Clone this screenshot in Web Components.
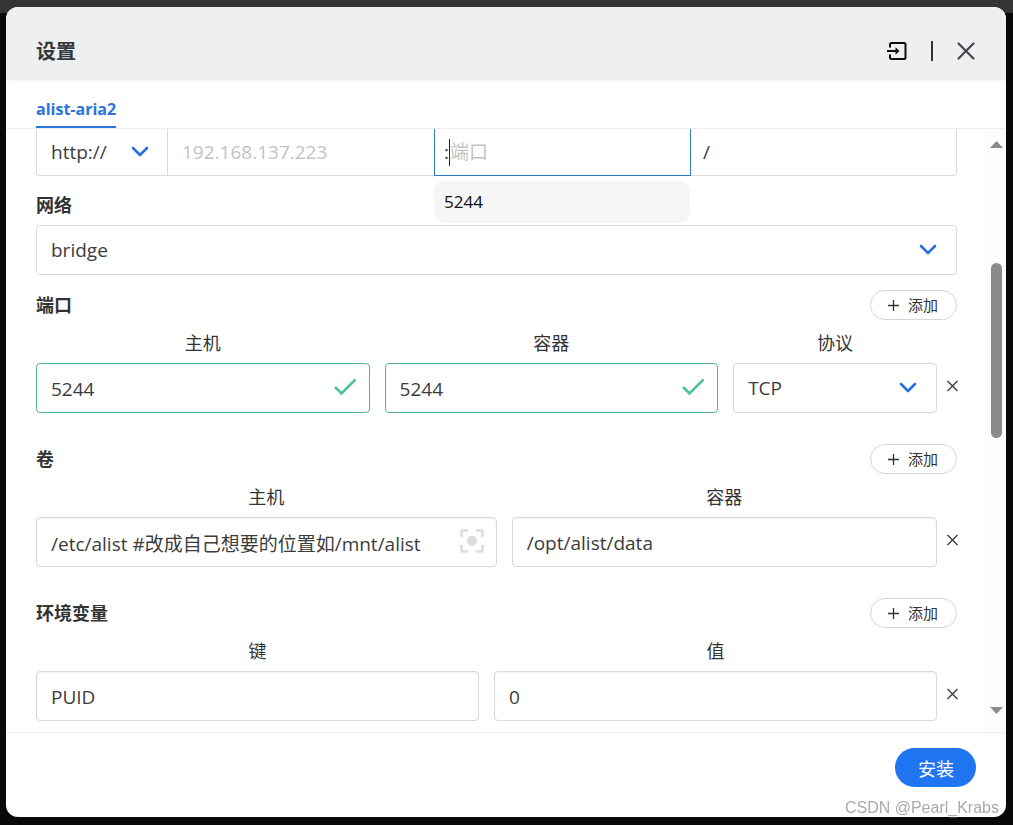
<!DOCTYPE html>
<html lang="zh-CN">
<head>
<meta charset="utf-8">
<title>设置</title>
<style>
  html, body { height: 100%; margin: 0; }
  body {
    box-sizing: border-box;
    padding: 7px 7px 8px 6px;
    background: linear-gradient(#333434 13px, #09090a 13px);
    font-family: "Open Sans", "Noto Sans CJK SC", sans-serif;
    color: #3c3c3c;
    overflow: hidden;
  }
</style>
</head>
<body>
<settings-dialog heading="设置">
  <tab-bar slot="tabs" label="alist-aria2"></tab-bar>
  <web-address></web-address>
  <network-field label="网络" value="bridge"></network-field>
  <list-section heading="端口" style="--cols: 18fr 18fr 11fr">
    <form-field label="主机" value="5244" icon="check"></form-field>
    <form-field label="容器" value="5244" icon="check"></form-field>
    <form-field label="协议" value="TCP" kind="select"></form-field>
  </list-section>
  <list-section heading="卷" style="--cols: 13fr 12fr">
    <form-field label="主机" value="/etc/alist #改成自己想要的位置如/mnt/alist" icon="pick"></form-field>
    <form-field label="容器" value="/opt/alist/data"></form-field>
  </list-section>
  <list-section heading="环境变量" style="--cols: 1fr 1fr">
    <form-field label="键" value="PUID"></form-field>
    <form-field label="值" value="0"></form-field>
  </list-section>
  <pill-button slot="footer" kind="primary">安装</pill-button>
</settings-dialog>
<water-mark>CSDN @Pearl_Krabs</water-mark>

<script>
const ICONS = {
  chevron: '<svg width="18" height="12" viewBox="0 0 18 12" fill="none" stroke="#2670e0" stroke-width="2.6" stroke-linecap="round" stroke-linejoin="round"><path d="M2 2l7 7 7-7"/></svg>',
  check: '<svg width="24" height="20" viewBox="0 0 24 20" fill="none" stroke="#4fc294" stroke-width="2.6"><path d="M2 10l6.5 6.5L22.500 2.500"/></svg>',
  pick: '<svg width="24" height="24" viewBox="0 0 24 24" fill="none" stroke="#dcdcdc" stroke-width="2.6"><path d="M1.500 8V3q0-1.500 1.500-1.500h5M16 1.500h5q1.500 0 1.500 1.500v5M22.500 16v5q0 1.500-1.500 1.500h-5M8 22.500H3q-1.500 0-1.500-1.500v-5"/><circle cx="12" cy="12" r="5" fill="#dcdcdc" stroke="none"/></svg>',
  remove: '<svg width="11" height="12" viewBox="0 0 11 12" fill="none" stroke="#444" stroke-width="1.500"><path d="M.5 1l10 10M10.500 1l-10 10"/></svg>',
  plus: '<svg width="11" height="11" viewBox="0 0 11 11" fill="none" stroke="#333" stroke-width="1.300"><path d="M5.500 0v11M0 5.500h11"/></svg>',
  close: '<svg width="18" height="18" viewBox="0 0 18 18" fill="none" stroke="#45484b" stroke-width="2.200" stroke-linecap="round"><path d="M1.500 1.500l15 15M16.500 1.500l-15 15"/></svg>',
  enter: '<svg width="20" height="18" viewBox="0 0 20 18" fill="none" stroke="#0c0c0c" stroke-width="2"><path d="M3 5.500V2.500q0-1.500 1.500-1.500h12.500q1.500 0 1.500 1.500v13q0 1.500-1.500 1.500H4.500q-1.500 0-1.500-1.500v-3"/><path d="M0 9h10"/><path d="M8.500 5.200L12.500 9l-4 3.800z" fill="#0c0c0c" stroke="none"/></svg>'
};

const CONTROL_CSS = `
  *, *::before { box-sizing: border-box; }
  input, select {
    font: inherit; color: inherit; width: 100%; height: 100%; min-width: 0; margin: 0;
    border: 0; outline: 0; background: transparent; appearance: none; padding: 0 14px;
    text-overflow: ellipsis;
  }
  input::placeholder { color: #c3c3c3; opacity: 1; }
  svg { display: block; pointer-events: none; flex: none; }
  .box {
    display: grid; align-items: center; height: 50px; font-size: 19px;
    border: 1px solid #d9d9d9; border-radius: 4px; background: #fff;
  }
  .box > * { grid-area: 1 / 1; }
  .box > svg { justify-self: end; margin-right: 19px; }
`;

class Base extends HTMLElement {
  connectedCallback() {
    if (this.shadowRoot) return;
    this.attachShadow({ mode: 'open' }).innerHTML = this.render();
  }
  attr(name) { return this.getAttribute(name) || ''; }
}

customElements.define('pill-button', class extends Base {
  render() {
    const primary = this.attr('kind') === 'primary';
    return `<style>
      :host { display: block; }
      button {
        display: flex; align-items: center; justify-content: center; gap: 9px; margin: 0;
        font-family: "Noto Sans CJK SC", sans-serif; line-height: 20px; cursor: pointer; border-radius: 20px;
      }
      .primary { height: 39px; padding: 0 22px 0 23px; border: 0; background: #2076f2; color: #fff; font-size: 18px; }
      .add { height: 30px; padding: 0 18px 0 17px; border: 1px solid #d6d6d6; background: #fff; color: #333; font-size: 15px; }
    </style>
    <button type="button" class="${primary ? 'primary' : 'add'}">${primary ? '' : ICONS.plus}<slot></slot></button>`;
  }
});

customElements.define('form-field', class extends Base {
  render() {
    const icon = this.attr('icon');
    const select = this.attr('kind') === 'select';
    return `<style>${CONTROL_CSS}
      :host { display: block; min-width: 0; }
      label { display: block; text-align: center; font-size: 18px; line-height: 30px; padding: 8px 0 5px; color: #333; }
      .text { box-shadow: inset 0 1px 2px #0000000f; }
      .text input { padding-top: 2px; }
      .check { border-color: #4dba8e; box-shadow: none; }
      .box.check > svg { margin: 0 12px 3px 0; }
      .box.pick > svg { margin: 0 12px 2px 0; }
    </style>
    <label for="control">${this.attr('label')}</label>
    <div class="box ${select ? '' : 'text'} ${icon}">
      ${select
        ? `<select id="control"><option>${this.attr('value')}</option></select>${ICONS.chevron}`
        : `<input id="control" type="text" value="${this.attr('value')}">${ICONS[icon] || ''}`}
    </div>`;
  }
});

customElements.define('network-field', class extends Base {
  render() {
    return `<style>${CONTROL_CSS}
      :host { display: block; margin-bottom: 15px; }
      label { display: block; font-size: 18px; font-weight: 700; line-height: 30px; padding: 14px 0 5px; color: #333; }
    </style>
    <label for="net">${this.attr('label')}</label>
    <div class="box"><select id="net"><option>${this.attr('value')}</option></select>${ICONS.chevron}</div>`;
  }
});

customElements.define('web-address', class extends Base {
  render() {
    return `<style>${CONTROL_CSS}
      :host { display: block; }
      .row { display: grid; grid-template-columns: 132px 29fr 28fr 29fr; height: 47px; font-size: 19px; }
      .cell { display: flex; align-items: center; position: relative; min-width: 0; border-bottom: 1px solid #d9d9d9; }
      .scheme { border-left: 1px solid #d9d9d9; border-right: 1px solid #d9d9d9; border-bottom-left-radius: 4px; display: grid; }
      .scheme > * { grid-area: 1 / 1; }
      .scheme svg { justify-self: end; margin-right: 18px; }
      .port { border: 1px solid #2f7ac6; border-top: 0; padding-left: 9px; }
      .port input { padding: 0; }
      .caret { width: 1px; height: 27px; background: #222; flex: none; }
      .path { border-right: 1px solid #d9d9d9; border-bottom-right-radius: 4px; padding-left: 12px; }
      .path input { padding: 0 8px; }
      .menu {
        position: absolute; z-index: 2; top: 52px; left: -1px; right: 0; margin: 0; padding: 0 10px;
        list-style: none; height: 42px; line-height: 42px; border-radius: 10px;
        background: #f6f6f6; color: #111; font-size: 17px;
      }
    </style>
    <div class="row">
      <div class="cell scheme"><select aria-label="协议"><option>http://</option></select>${ICONS.chevron}</div>
      <div class="cell"><input type="text" aria-label="主机" placeholder="192.168.137.223"></div>
      <div class="cell port"><span>:</span><span class="caret"></span>
        <input type="text" aria-label="端口" placeholder="端口">
        <ul class="menu"><li>5244</li></ul>
      </div>
      <div class="cell path"><span>/</span><input type="text" aria-label="路径"></div>
    </div>`;
  }
});

customElements.define('list-section', class extends Base {
  render() {
    return `<style>
      :host { display: block; margin-bottom: 31px; }
      header { display: flex; align-items: center; justify-content: space-between; height: 30px; }
      h3 { margin: 0; font-size: 18px; line-height: 30px; color: #333; }
      .line { display: flex; align-items: end; }
      .fields { flex: 1; min-width: 0; display: grid; grid-template-columns: var(--cols); gap: 15px; }
      button { flex: none; display: flex; align-items: center; width: 20px; height: 50px; margin: 0; padding: 0 0 4px 10px; border: 0; background: none; }
      button svg { flex: none; overflow: visible; }
    </style>
    <header><h3>${this.attr('heading')}</h3><pill-button>添加</pill-button></header>
    <div class="line">
      <div class="fields"><slot></slot></div>
      <button type="button" aria-label="删除">${ICONS.remove}</button>
    </div>`;
  }
});

customElements.define('tab-bar', class extends Base {
  render() {
    return `<style>
      :host { display: block; box-sizing: border-box; padding: 0 30px; height: 49px; border-bottom: 1px solid #eee; }
      a { display: inline-block; box-sizing: border-box; height: 48px; line-height: 58px; font-size: 16px; font-weight: 700; color: #2a74dd; text-decoration: none; border-bottom: 2px solid #2a74dd; }
    </style>
    <nav><a href="#">${this.attr('label')}</a></nav>`;
  }
});

customElements.define('scroll-rail', class extends Base {
  render() {
    return `<style>
      :host { display: flex; flex-direction: column; align-items: center; width: 19px; box-sizing: border-box; padding: 12px 0 18px; background: #fdfdfd; }
      svg { display: block; flex: none; }
      .track { flex: 1; width: 11px; display: flex; flex-direction: column; }
      .before { flex: 115; }
      .thumb { flex: 175; border-radius: 6px; background: #8b8b8b; }
      .after { flex: 269; }
    </style>
    <svg width="13" height="7"><path d="M0 7L6.500 0 13 7z" fill="#8b8b8b"/></svg>
    <div class="track"><div class="before"></div><div class="thumb"></div><div class="after"></div></div>
    <svg width="13" height="7"><path d="M0 0L6.500 7 13 0z" fill="#8b8b8b"/></svg>`;
  }
});

customElements.define('settings-dialog', class extends Base {
  render() {
    return `<style>
      :host { display: flex; flex-direction: column; height: 100%; border-radius: 12px; background: #fff; overflow: hidden; }
      header { display: flex; align-items: center; box-sizing: border-box; height: 73px; padding: 14px 31px 0 30px; background: #eeeff1; box-shadow: 0 1px 4px #0000000d; flex: none; }
      h2 { flex: 1; margin: 0; font-size: 20px; line-height: 30px; padding-top: 2px; color: #33383d; }
      button { display: block; margin: 0; padding: 0; border: 0; background: none; }
      svg { display: block; }
      .bar { width: 2px; height: 20px; background: #333; margin: 0 24px; }
      .body { flex: 1; min-height: 0; display: flex; }
      .content { flex: 1; min-width: 0; overflow: hidden; padding: 0 30px; }
      footer { flex: none; display: flex; justify-content: flex-end; padding: 15px 30px 30px; border-top: 1px solid #ececec; }
    </style>
    <header>
      <h2>${this.attr('heading')}</h2>
      <button type="button" aria-label="导入">${ICONS.enter}</button>
      <span class="bar"></span>
      <button type="button" aria-label="关闭">${ICONS.close}</button>
    </header>
    <slot name="tabs"></slot>
    <div class="body"><div class="content"><slot></slot></div><scroll-rail></scroll-rail></div>
    <footer><slot name="footer"></slot></footer>`;
  }
});

customElements.define('water-mark', class extends Base {
  render() {
    return `<style>
      :host { position: fixed; right: 14px; bottom: 7px; font: 16px/20px "Liberation Sans", sans-serif; color: #a9a9a9; text-shadow: 1px 1px 1px #fff; pointer-events: none; }
    </style><slot></slot>`;
  }
});
</script>
</body>
</html>
